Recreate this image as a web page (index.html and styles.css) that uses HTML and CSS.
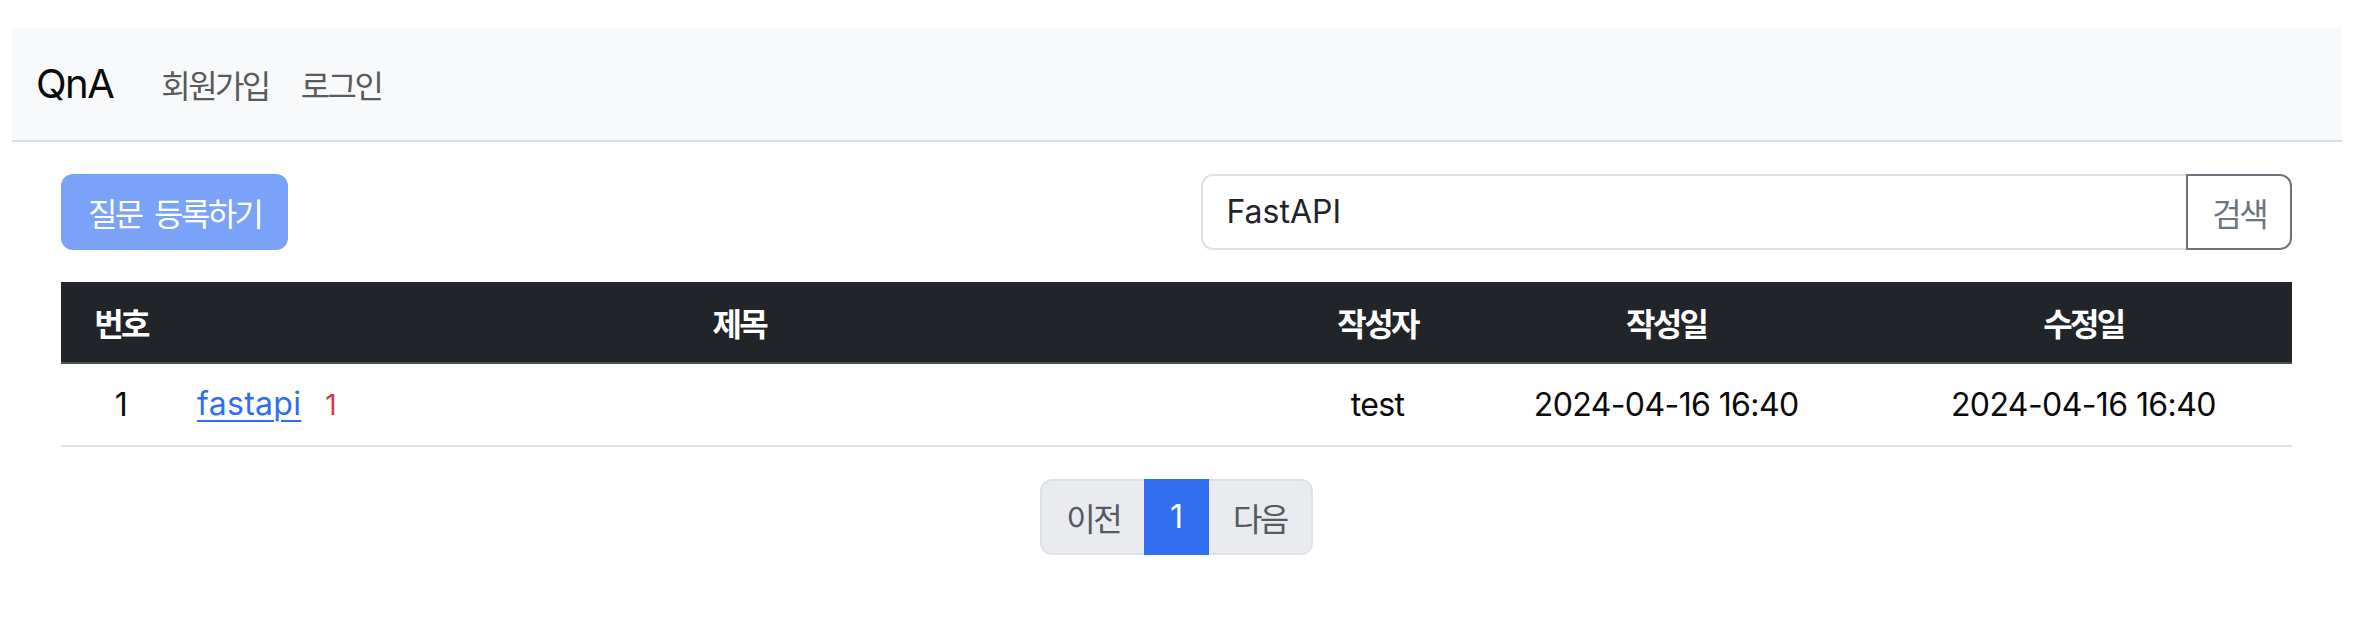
FILE: index.html
```html
<!DOCTYPE html>
<html lang="ko">
<head>
<meta charset="utf-8">
<title>QnA</title>
<link rel="stylesheet" href="styles.css">
</head>
<body>
<nav class="navbar">
  <div class="navbar-inner">
    <a class="brand" href="#">QnA</a>
    <ul class="nav">
      <li><a class="nav-link ko" href="#">회원가입</a></li>
      <li><a class="nav-link ko" href="#">로그인</a></li>
    </ul>
  </div>
</nav>
<main class="container">
  <div class="toolbar">
    <div class="col">
      <button class="btn-primary ko" disabled>질문 등록하기</button>
    </div>
    <div class="col">
      <div class="input-group">
        <input class="form-control" type="text" value="FastAPI">
        <button class="btn-outline ko">검색</button>
      </div>
    </div>
  </div>
  <table class="table">
    <colgroup>
      <col class="c-num"><col class="c-title"><col class="c-author"><col class="c-date"><col class="c-date">
    </colgroup>
    <thead>
      <tr>
        <th class="ko">번호</th>
        <th class="ko">제목</th>
        <th class="ko">작성자</th>
        <th class="ko">작성일</th>
        <th class="ko">수정일</th>
      </tr>
    </thead>
    <tbody>
      <tr>
        <td>1</td>
        <td class="title-cell"><a class="title-link" href="#">fastapi</a><span class="answer-count">1</span></td>
        <td>test</td>
        <td>2024-04-16 16:40</td>
        <td>2024-04-16 16:40</td>
      </tr>
    </tbody>
  </table>
  <ul class="pagination">
    <li class="page-item disabled"><span class="page-link ko">이전</span></li>
    <li class="page-item active"><span class="page-link">1</span></li>
    <li class="page-item disabled"><span class="page-link ko">다음</span></li>
  </ul>
</main>
</body>
</html>
```
FILE: styles.css
```css
* {
  box-sizing: border-box;
}

body {
  margin: 0;
  padding: 28px 18px 0 12px;
  font-family: Inter, "Noto Sans CJK KR", sans-serif;
  font-size: 32px;
  line-height: 48px;
  color: #212529;
  background: #ffffff;
}

.ko {
  font-family: "Noto Sans CJK KR", sans-serif;
  letter-spacing: -2.6px;
}

/* Navbar */
.navbar {
  background: #f8f9fa;
  border-bottom: 2px solid #dadde3;
  padding: 16px 0;
}

.navbar-inner {
  display: flex;
  align-items: center;
  padding: 0 24px;
}

.brand {
  font-size: 40px;
  line-height: 60px;
  padding: 10px 0;
  margin-right: 32px;
  color: #0a0a0a;
  text-decoration: none;
  letter-spacing: -1.5px;
}

.nav {
  display: flex;
  list-style: none;
  margin: 0;
  padding: 0;
}

.nav-link {
  display: block;
  padding: 16px 16px;
  color: #5a5a5a;
  text-decoration: none;
}

/* Container */
.container {
  padding: 0 50px 0 49px;
}

.toolbar {
  display: grid;
  grid-template-columns: 1fr 1fr;
  column-gap: 48px;
  margin: 32px 0;
}

.btn-primary {
  font-size: 32px;
  line-height: 48px;
  padding: 12px 25px;
  border: 2px solid #7aa2f8;
  border-radius: 12px;
  background: #7aa2f8;
  color: #ffffff;
  word-spacing: 6px;
}

.input-group {
  display: flex;
}

.form-control {
  flex: 1;
  min-width: 0;
  font-family: Inter, sans-serif;
  font-size: 32px;
  line-height: 48px;
  padding: 12px 24px;
  border: 2px solid #dee2e6;
  border-radius: 12px 0 0 12px;
  color: #212529;
  background: #ffffff;
}

.btn-outline {
  font-size: 32px;
  line-height: 48px;
  padding: 12px 24px;
  margin-left: -2px;
  border: 2px solid #6c757d;
  border-radius: 0 12px 12px 0;
  background: transparent;
  color: #6c757d;
}

/* Table */
.table {
  width: 100%;
  border-collapse: collapse;
  table-layout: fixed;
  margin-bottom: 32px;
}

.c-num { width: 120px; }
.c-title { width: 1116px; }
.c-author { width: 160px; }
.c-date { width: 417px; }

.table th {
  background: #212529;
  color: #ffffff;
  font-weight: 700;
  padding: 16px;
  text-align: center;
  border-bottom: 2px solid #4d5154;
}

.table td {
  padding: 16px;
  text-align: center;
  border-bottom: 2px solid #dee2e6;
  color: #0a0a0a;
  letter-spacing: -0.6px;
}

.table td.title-cell {
  text-align: left;
  letter-spacing: 0;
}

.title-link {
  color: #2f6ef0;
  text-decoration: underline;
  text-decoration-thickness: 2px;
  text-underline-offset: 5px;
  letter-spacing: 0.3px;
}

.answer-count {
  font-size: 28px;
  color: #d13a44;
  margin-left: 24px;
}

/* Pagination */
.pagination {
  display: flex;
  justify-content: center;
  list-style: none;
  margin: 0;
  padding: 0;
}

.page-link {
  display: block;
  padding: 12px 24px;
  border: 2px solid #dee2e6;
  background: #e9ebef;
  color: #565a5e;
  margin-left: -2px;
}

.page-item:first-child .page-link {
  margin-left: 0;
  border-radius: 12px 0 0 12px;
}

.page-item:last-child .page-link {
  border-radius: 0 12px 12px 0;
}

.page-item.active .page-link {
  background: #316ff0;
  border-color: #316ff0;
  color: #ffffff;
  position: relative;
}
```
